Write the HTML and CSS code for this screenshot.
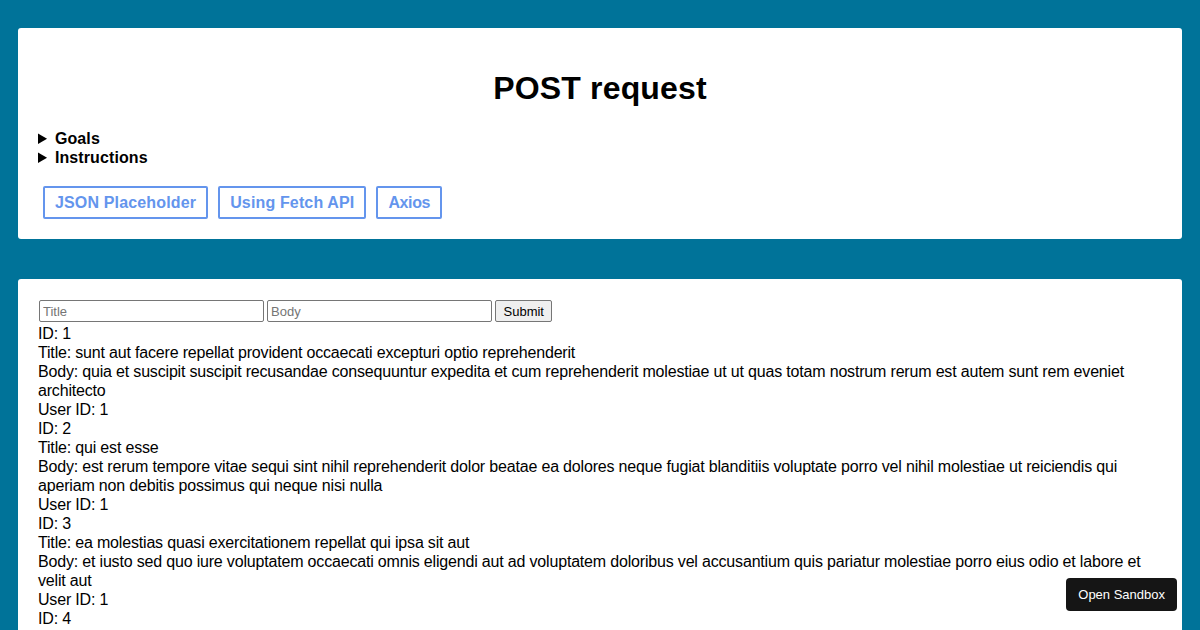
FILE: index.html
```html
<!DOCTYPE html>
<html lang="en">
<head>
<meta charset="utf-8">
<title>POST request</title>
<link rel="stylesheet" href="styles.css">
</head>
<body>
<div class="page">
  <section class="card header">
    <h1 class="title">POST request</h1>
    <details class="info"><summary>Goals</summary></details>
    <details class="info"><summary>Instructions</summary></details>
    <nav class="links">
      <a class="link" href="#">JSON Placeholder</a>
      <a class="link" href="#">Using Fetch API</a>
      <a class="link link-short" href="#">Axios</a>
    </nav>
  </section>
  <section class="card content">
    <form class="post-form">
      <input class="field" type="text" placeholder="Title">
      <input class="field" type="text" placeholder="Body">
      <button class="submit" type="button">Submit</button>
    </form>
    <div class="post">
      <div>ID: 1</div>
      <div>Title: sunt aut facere repellat provident occaecati excepturi optio reprehenderit</div>
      <div>Body: quia et suscipit suscipit recusandae consequuntur expedita et cum reprehenderit molestiae ut ut quas totam nostrum rerum est autem sunt rem eveniet architecto</div>
      <div>User ID: 1</div>
    </div>
    <div class="post">
      <div>ID: 2</div>
      <div>Title: qui est esse</div>
      <div>Body: est rerum tempore vitae sequi sint nihil reprehenderit dolor beatae ea dolores neque fugiat blanditiis voluptate porro vel nihil molestiae ut reiciendis qui aperiam non debitis possimus qui neque nisi nulla</div>
      <div>User ID: 1</div>
    </div>
    <div class="post">
      <div>ID: 3</div>
      <div>Title: ea molestias quasi exercitationem repellat qui ipsa sit aut</div>
      <div>Body: et iusto sed quo iure voluptatem occaecati omnis eligendi aut ad voluptatem doloribus vel accusantium quis pariatur molestiae porro eius odio et labore et velit aut</div>
      <div>User ID: 1</div>
    </div>
    <div class="post">
      <div>ID: 4</div>
    </div>
  </section>
</div>
<a class="sandbox" href="#">Open Sandbox</a>
</body>
</html>
```
FILE: styles.css
```css
html, body {
  margin: 0;
  padding: 0;
}
body {
  background: #007399;
  font-family: "Liberation Sans", Arial, sans-serif;
  font-size: 16px;
  color: #000;
}
.page {
  padding: 28px 18px 20px;
  display: flex;
  flex-direction: column;
  gap: 40px;
}
.card {
  background: #fff;
  border-radius: 3px;
  padding: 20px;
}
.title {
  margin: 22px 0 22px;
  font-size: 32px;
  line-height: 37px;
  text-align: center;
  font-weight: bold;
  letter-spacing: 0.17px;
}
.info summary {
  font-weight: bold;
  line-height: 19px;
  cursor: pointer;
  letter-spacing: 0.1px;
}
.links {
  display: flex;
  gap: 10px;
  margin: 19px 0 0 5px;
}
.link {
  display: block;
  border: 2px solid #6495ed;
  border-radius: 2px;
  padding: 5px 10px;
  line-height: 19px;
  color: #6495ed;
  font-weight: bold;
  text-decoration: none;
  letter-spacing: 0.15px;
}
.link-short {
  letter-spacing: -0.4px;
}
.post-form {
  display: flex;
  align-items: center;
  gap: 3px;
  margin: 1px 0 2px 1px;
  height: 22px;
}
.field {
  box-sizing: border-box;
  width: 225px;
  height: 22px;
  margin: 0;
  padding: 1px 3px;
  font-family: "Liberation Sans", Arial, sans-serif;
  font-size: 13px;
  border: 1px solid #767676;
  border-radius: 2px;
}
.field::placeholder {
  color: #757575;
}
.submit {
  box-sizing: border-box;
  height: 22px;
  margin: 0;
  padding: 1px 7.5px;
  font-family: "Liberation Sans", Arial, sans-serif;
  font-size: 13px;
  background: #efefef;
  border: 1px solid #767676;
  border-radius: 2px;
  color: #000;
}
.post {
  line-height: 19px;
  letter-spacing: -0.18px;
}
.sandbox {
  position: fixed;
  right: 23px;
  bottom: 19px;
  background: #151515;
  color: #fff;
  font-size: 13px;
  line-height: 15px;
  padding: 9px 12px;
  border-radius: 4px;
  text-decoration: none;
}
```
